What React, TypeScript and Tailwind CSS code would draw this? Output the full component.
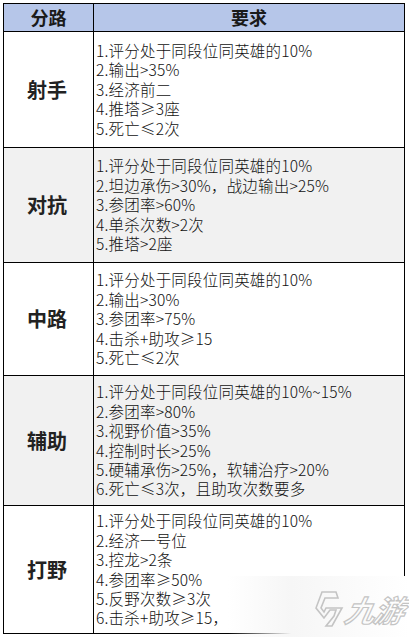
import React from "react";

type Row = { name: string; h: string; bg: string; items: string[] };

const rows: Row[] = [
  {
    name: "射手",
    h: "h-[116px]",
    bg: "bg-white",
    items: ["1.评分处于同段位同英雄的10%", "2.输出>35%", "3.经济前二", "4.推塔≥3座", "5.死亡≤2次"],
  },
  {
    name: "对抗",
    h: "h-[115px]",
    bg: "bg-[#f1f1f1]",
    items: ["1.评分处于同段位同英雄的10%", "2.坦边承伤>30%，战边输出>25%", "3.参团率>60%", "4.单杀次数>2次", "5.推塔>2座"],
  },
  {
    name: "中路",
    h: "h-[113px]",
    bg: "bg-white",
    items: ["1.评分处于同段位同英雄的10%", "2.输出>30%", "3.参团率>75%", "4.击杀+助攻≥15", "5.死亡≤2次"],
  },
  {
    name: "辅助",
    h: "h-[130px]",
    bg: "bg-[#f1f1f1]",
    items: [
      "1.评分处于同段位同英雄的10%~15%",
      "2.参团率>80%",
      "3.视野价值>35%",
      "4.控制时长>25%",
      "5.硬辅承伤>25%，软辅治疗>20%",
      "6.死亡≤3次，且助攻次数要多",
    ],
  },
  {
    name: "打野",
    h: "h-[128px]",
    bg: "bg-white",
    items: ["1.评分处于同段位同英雄的10%", "2.经济一号位", "3.控龙>2条", "4.参团率≥50%", "5.反野次数≥3次", "6.击杀+助攻≥15，"],
  },
];

const font = "font-['Noto_Sans_CJK_SC','Noto_Sans',sans-serif]";

export default function App() {
  return (
    <div className={`relative w-[409px] h-[637px] overflow-hidden bg-white ${font}`}>
      <div className="ml-[3px] mt-[3px] w-[402px] border border-black">
        {/* header */}
        <div className="flex h-[27px] bg-[#b6c6e9]">
          <div className="w-[89px] flex items-center justify-center text-[18px] font-bold text-[#1a1a1a]">分路</div>
          <div className="flex-1 flex items-center justify-center border-l border-black text-[18px] font-bold text-[#1a1a1a]">
            要求
          </div>
        </div>

        {rows.map((r) => (
          <div key={r.name} className={`flex border-t border-black ${r.h} ${r.bg}`}>
            <div className="w-[89px] flex items-center justify-center text-[20px] font-bold text-[#222] pr-[3px]">
              {r.name}
            </div>
            <div className="flex-1 flex flex-col justify-center border-l border-black pl-[2px] text-[15.5px] leading-[19.4px] font-light text-[#111] tracking-[0.2px]">
              {r.items.map((t) => (
                <div key={t} className="whitespace-nowrap">
                  {t}
                </div>
              ))}
            </div>
          </div>
        ))}
      </div>

      {/* watermark */}
      <div className="absolute left-[228px] top-[576px] w-[181px] h-[61px] bg-gradient-to-r from-white/0 via-[#f6f6f6] via-35% to-white">
        <div className="absolute left-[86px] top-[14px] flex items-center gap-[2px]">
          <svg width="30" height="38" viewBox="0 0 30 38" fill="none" stroke="#c4c4c4" strokeWidth="1.6">
            <path d="M22 2 L8 2 L2 18 L10 28 L16 20 L22 20 L20 26 L12 36 L18 36 L28 18 L12 18 L10 22 L7 18 L11 8 L24 8 Z" />
          </svg>
          <span className="text-[30px] italic font-bold text-transparent [-webkit-text-stroke:1.2px_#c4c4c4] leading-none -skew-x-12 tracking-[-1px]">
            九游
          </span>
        </div>
      </div>
    </div>
  );
}
